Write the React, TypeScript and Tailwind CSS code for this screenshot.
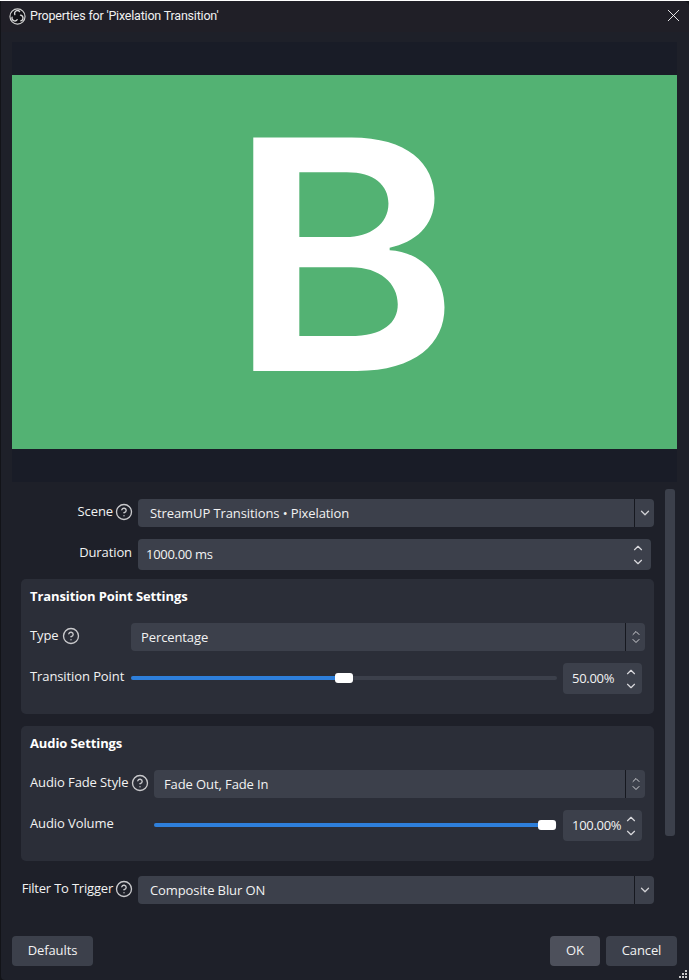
import { ChevronDown, ChevronUp, CircleHelp, X } from 'lucide-react';

const Help = () => <CircleHelp className="w-[18px] h-[18px] -mx-[1px] text-[#c9c9cc] shrink-0" strokeWidth={1.8} />;

const ObsLogo = () => (
  <svg width="17" height="17" viewBox="0 0 32 32" className="shrink-0">
    <circle cx="16" cy="16" r="14.2" fill="#111116" stroke="#d0d0d0" strokeWidth="2.2" />
    <g fill="none" stroke="#d8d8d8" strokeWidth="2.4" strokeLinecap="round">
      <path d="M11 12.500a5.500 5.500 0 0 1 9-6" />
      <path d="M11 12.500a5.500 5.500 0 0 1 9-6" transform="rotate(120 16 16)" />
      <path d="M11 12.500a5.500 5.500 0 0 1 9-6" transform="rotate(240 16 16)" />
    </g>
  </svg>
);

const Combo = ({ value, chevron = 'single', inset = 'pl-3' }: { value: string; chevron?: 'single' | 'double'; inset?: string }) => (
  <div className="flex-1 h-7 flex rounded-[4px] bg-[#3c404b] text-[13px] text-[#f2f2f2]">
    <div className={`flex-1 pt-[1px] flex items-center ${inset}`}>{value}</div>
    <div className="w-5 border-l border-[#16181f] flex flex-col items-center justify-center">
      {chevron === 'single' ? (
        <ChevronDown className="w-[14px] h-[14px] text-[#d0d0d4]" strokeWidth={2.2} />
      ) : (
        <>
          <ChevronUp className="w-3 h-3 -mb-[2px] text-[#d0d0d4]" strokeWidth={2} />
          <ChevronDown className="w-3 h-3 -mt-[2px] text-[#d0d0d4]" strokeWidth={2} />
        </>
      )}
    </div>
  </div>
);

const SpinArrows = () => (
  <div className="flex flex-col items-center gap-0">
    <ChevronUp className="w-4 h-[14px] text-[#d8d8dc]" strokeWidth={2} />
    <ChevronDown className="w-4 h-[14px] text-[#d8d8dc]" strokeWidth={2} />
  </div>
);

const SpinBox = ({ value }: { value: string }) => (
  <div className="w-[79px] h-[31px] ml-[6px] mr-[3px] flex items-center justify-between pl-[9px] pr-[3px] rounded-[4px] bg-[#3c404b] text-[13px] text-[#f2f2f2]">
    <span className="whitespace-nowrap tracking-[-0.3px]">{value}</span>
    <SpinArrows />
  </div>
);

const Slider = ({ percent }: { percent: number }) => (
  <div className="flex-1 relative h-[10px] -mt-[1px] flex items-center">
    <div className="w-full h-1 rounded-full bg-[#3c404b]" />
    <div className="absolute left-0 h-1 rounded-l-full bg-[#2e7fdb]" style={{ width: `${percent}%` }} />
    <div
      className="absolute h-[10px] w-[18px] rounded-[3px] bg-white"
      style={{ left: `calc(${percent}% - ${(percent / 100) * 18}px)` }}
    />
  </div>
);

const GroupBox = ({ title, children }: { title: string; children: React.ReactNode }) => (
  <div className="h-[135px] px-[9px] pt-[8px] rounded-[5px] bg-[#2b2e38]">
    <div className="h-[18px] text-[13px] font-bold leading-[18px] text-white">{title}</div>
    <div className="mt-[18px] flex flex-col gap-3">{children}</div>
  </div>
);

export default function App() {
  return (
    <div className="w-[689px] h-[980px] bg-[#121318] [font-family:'Open_Sans',sans-serif] text-[13px] tracking-[-0.1px] text-[#f2f2f2]">
      <div className="w-[688px] h-[979px] ml-[1px] mt-[1px] flex flex-col rounded-tr-[6px] rounded-bl-[4px] overflow-hidden bg-[#1e2029]">
        {/* title bar */}
        <div className="h-[31px] shrink-0 flex items-center pl-2 pr-[5px] gap-[4px] bg-[#201f27]">
          <ObsLogo />
          <span className="[font-family:Roboto,sans-serif] tracking-[-0.2px] text-[12.5px] text-[#f0f0f0]">Properties for 'Pixelation Transition'</span>
          <X className="ml-auto -mt-[3px] w-[21px] h-[21px] text-white" strokeWidth={1} />
        </div>

        {/* preview */}
        <div className="mt-[10px] ml-[11px] w-[665px] h-[440px] shrink-0 flex items-center bg-[#191c27]">
          <div className="w-full h-[374px] flex items-center justify-center bg-[#53b273] text-white">
            <span className="[font-family:Inter,sans-serif] font-semibold text-[321px] leading-none tracking-normal scale-x-[1.1] -ml-[2px] -mt-[15px]">
              B
            </span>
          </div>
        </div>

        <div className="flex-1 min-h-0 flex">
          {/* form */}
          <div className="ml-[20px] mt-[17px] w-[633px] flex flex-col">
            <div className="flex items-center">
              <div className="w-[117px] pr-[6px] flex items-center justify-end gap-[3px] -mt-[2px]">
                <span>Scene</span>
                <Help />
              </div>
              <Combo value="StreamUP Transitions • Pixelation" />
            </div>

            <div className="mt-3 flex items-center">
              <div className="w-[117px] pr-[6px] text-right -mt-[3px]">Duration</div>
              <div className="w-[513px] h-[31px] flex items-center justify-between pl-[8px] pr-[5px] rounded-[4px] bg-[#3c404b] text-[#f2f2f2]">
                <span className="tracking-[-0.3px]">1000.00 ms</span>
                <SpinArrows />
              </div>
            </div>

            <div className="mt-[9px]">
              <GroupBox title="Transition Point Settings">
                <div className="flex items-center">
                  <div className="w-[101px] flex items-center gap-[4px] -mt-[2px]">
                    <span>Type</span>
                    <Help />
                  </div>
                  <Combo value="Percentage" chevron="double" inset="pl-[10px]" />
                </div>
                <div className="flex items-center">
                  <div className="w-[101px] whitespace-nowrap -mt-[3px]">Transition Point</div>
                  <Slider percent={50} />
                  <SpinBox value="50.00%" />
                </div>
              </GroupBox>
            </div>

            <div className="mt-3">
              <GroupBox title="Audio Settings">
                <div className="flex items-center">
                  <div className="w-[124px] flex items-center gap-[4px] -mt-[2px]">
                    <span className="whitespace-nowrap">Audio Fade Style</span>
                    <Help />
                  </div>
                  <Combo value="Fade Out, Fade In" chevron="double" inset="pl-[10px]" />
                </div>
                <div className="flex items-center">
                  <div className="w-[124px] whitespace-nowrap -mt-[3px]">Audio Volume</div>
                  <Slider percent={99.8} />
                  <SpinBox value="100.00%" />
                </div>
              </GroupBox>
            </div>

            <div className="mt-[15px] flex items-center">
              <div className="w-[117px] pr-[6px] flex items-center justify-end gap-[3px] -mt-[2px]">
                <span className="whitespace-nowrap tracking-[-0.2px]">Filter To Trigger</span>
                <Help />
              </div>
              <Combo value="Composite Blur ON" />
            </div>
          </div>

          {/* scrollbar */}
          <div className="ml-[11px] mt-[7px] w-[10px] h-[347px] rounded-[3px] bg-[#3c404b]" />
        </div>

        {/* footer */}
        <div className="relative h-[44px] shrink-0 pl-[11px] pr-[11px] pb-[14px] flex items-stretch">
          <button className="w-[81px] rounded-[4px] bg-[#3c404b]">Defaults</button>
          <button className="ml-auto mr-[6px] w-[50px] rounded-[4px] bg-[#4d505b]">OK</button>
          <button className="mr-[1px] w-[71px] rounded-[4px] bg-[#3c404b]">Cancel</button>
          <svg width="9" height="9" viewBox="0 0 9 9" className="absolute right-[1px] bottom-[1px]" fill="#c8c8c8">
            <rect x="6" y="0" width="2" height="2" />
            <rect x="3" y="3" width="2" height="2" />
            <rect x="6" y="3" width="2" height="2" />
            <rect x="0" y="6" width="2" height="2" />
            <rect x="3" y="6" width="2" height="2" />
            <rect x="6" y="6" width="2" height="2" />
          </svg>
        </div>
      </div>
    </div>
  );
}
